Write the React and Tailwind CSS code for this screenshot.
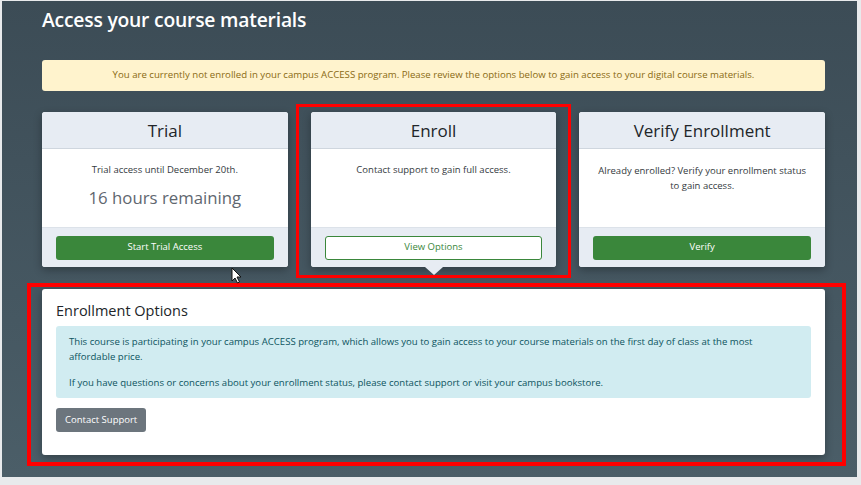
import { useState } from "react";

function Cursor() {
  return (
    <svg
      width="11"
      height="17"
      viewBox="0 0 11 17"
      className="absolute left-[229px] top-[266px] pointer-events-none"
    >
      <path
        d="M1 1 L1 14 L4 11 L6.5 16 L8.5 15 L6 10 L10 10 Z"
        fill="#ffffff"
        stroke="#111111"
        strokeWidth="1"
        strokeLinejoin="round"
      />
    </svg>
  );
}

function OptionCard({ title, children, action, highlighted, caret }) {
  return (
    <div className="relative w-[246px] bg-white rounded-[3px] shadow-[0_3px_8px_rgba(0,0,0,0.3)] flex flex-col">
      <div className="h-[37px] bg-[#e7ecf3] border-b border-[#cfd6de] rounded-t-[3px] flex items-center justify-center">
        <span className="text-[17px] text-[#212529] leading-none">{title}</span>
      </div>
      <div className="h-[78px] px-[14px] pt-[14px] text-center">{children}</div>
      <div className="h-[40px] bg-[#e7ecf3] border-t border-[#dce2e9] rounded-b-[3px] px-[14px] flex items-center">
        {action}
      </div>
      {caret && (
        <div className="absolute left-1/2 -translate-x-1/2 top-full w-0 h-0 border-l-[9px] border-r-[9px] border-t-[8px] border-l-transparent border-r-transparent border-t-[#e7ecf3]" />
      )}
      {highlighted && (
        <div className="absolute -left-[15px] -right-[15px] -top-[8px] -bottom-[11px] border-[3px] border-[#ff0000] pointer-events-none" />
      )}
    </div>
  );
}

export default function App() {
  const [showOptions, setShowOptions] = useState(true);

  return (
    <div
      className="w-[861px] h-[485px] bg-[#e8eaec] pl-[2px] pt-[1px] pr-[4px] pb-[8px]"
      style={{ fontFamily: '"Open Sans", "Noto Sans", Arial, sans-serif' }}
    >
      <div className="relative h-full bg-gradient-to-b from-[#3c4c56] to-[#4b5e68] pl-[40px] pr-[32px] pt-[7px]">
        {/* Title */}
        <h1 className="text-[19.3px] font-semibold text-white leading-[24px] tracking-[-0.2px]">
          Access your course materials
        </h1>

        {/* Not enrolled alert */}
        <div className="mt-[28px] h-[31px] bg-[#fff3cd] rounded-[3px] flex items-center justify-center">
          <span className="text-[9.65px] text-[#8a6a12]">
            You are currently not enrolled in your campus ACCESS program. Please review the options below to gain
            access to your digital course materials.
          </span>
        </div>

        {/* Option cards */}
        <div className="mt-[21px] flex gap-[23px]">
          <OptionCard
            title="Trial"
            action={
              <button className="w-full h-[24px] rounded-[3px] bg-[#3a873b] text-white text-[9.5px]">
                Start Trial Access
              </button>
            }
          >
            <p className="text-[9.5px] text-[#343a40] leading-[14px]">Trial access until December 20th.</p>
            <p className="mt-[10px] text-[16.8px] font-medium text-[#5f676f] leading-[22px]">16 hours remaining</p>
          </OptionCard>

          <OptionCard
            title="Enroll"
            highlighted
            caret={showOptions}
            action={
              <button
                onClick={() => setShowOptions(!showOptions)}
                className="w-full h-[24px] rounded-[3px] bg-white border border-[#3a873b] text-[#3a873b] text-[9.5px]"
              >
                View Options
              </button>
            }
          >
            <p className="text-[9.5px] text-[#343a40] leading-[14px]">Contact support to gain full access.</p>
          </OptionCard>

          <OptionCard
            title="Verify Enrollment"
            action={
              <button className="w-full h-[24px] rounded-[3px] bg-[#3a873b] text-white text-[9.5px]">
                Verify
              </button>
            }
          >
            <p className="text-[9.5px] text-[#343a40] leading-[15px]">
              Already enrolled? Verify your enrollment status to gain access.
            </p>
          </OptionCard>
        </div>

        {/* Enrollment options panel */}
        {showOptions && (
          <div className="relative mt-[22px] h-[166px] bg-white rounded-[3px] shadow-[0_3px_8px_rgba(0,0,0,0.3)] px-[14px] pt-[11px]">
            <h2 className="text-[14.5px] font-medium text-[#212529] leading-[22px]">Enrollment Options</h2>
            <div className="mt-[4px] h-[72px] bg-[#d1ecf1] rounded-[3px] px-[13px] pt-[8px] text-[9.6px] text-[#0c5460] leading-[15px]">
              <p>
                This course is participating in your campus ACCESS program, which allows you to gain access to your
                course materials on the first day of class at the most affordable price.
              </p>
              <p className="mt-[11px]">
                If you have questions or concerns about your enrollment status, please contact support or visit your
                campus bookstore.
              </p>
            </div>
            <button className="mt-[10px] h-[24px] px-[9px] rounded-[3px] bg-[#6c757d] text-white text-[9.5px]">
              Contact Support
            </button>
            <div className="absolute -left-[15px] -right-[21px] -top-[6px] -bottom-[11px] border-[4px] border-[#ff0000] pointer-events-none" />
          </div>
        )}

        <Cursor />
      </div>
    </div>
  );
}
